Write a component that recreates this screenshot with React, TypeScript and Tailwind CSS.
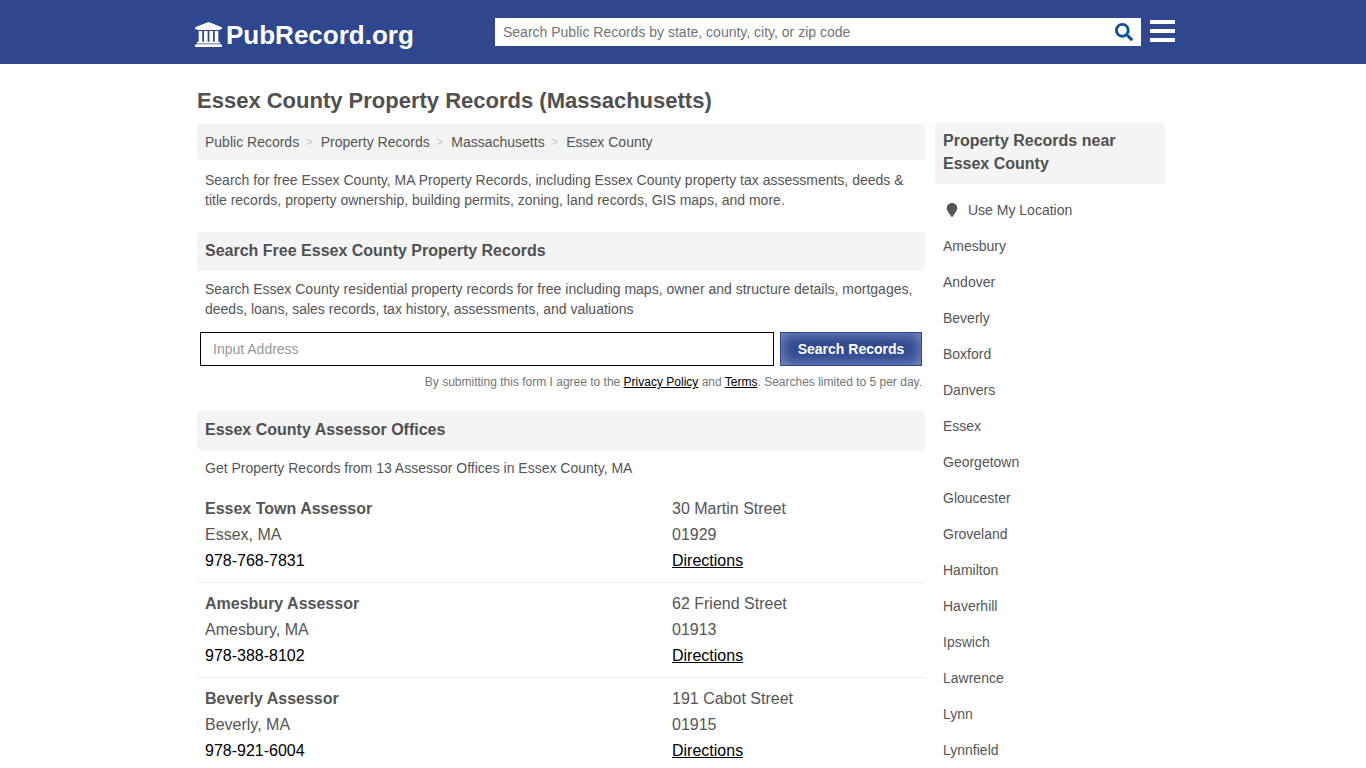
import { FaMapMarker, FaSearch } from "react-icons/fa";

const breadcrumbs = ["Public Records", "Property Records", "Massachusetts"];

const offices = [
  {
    name: "Essex Town Assessor",
    city: "Essex, MA",
    phone: "978-768-7831",
    street: "30 Martin Street",
    zip: "01929",
  },
  {
    name: "Amesbury Assessor",
    city: "Amesbury, MA",
    phone: "978-388-8102",
    street: "62 Friend Street",
    zip: "01913",
  },
  {
    name: "Beverly Assessor",
    city: "Beverly, MA",
    phone: "978-921-6004",
    street: "191 Cabot Street",
    zip: "01915",
  },
];

const nearby = [
  "Amesbury",
  "Andover",
  "Beverly",
  "Boxford",
  "Danvers",
  "Essex",
  "Georgetown",
  "Gloucester",
  "Groveland",
  "Hamilton",
  "Haverhill",
  "Ipswich",
  "Lawrence",
  "Lynn",
  "Lynnfield",
];

function CourthouseIcon() {
  return (
    <svg viewBox="0 0 1920 1792" fill="currentColor" className="h-[25px] w-[27px]" aria-hidden="true">
      <path d="M960 0l960 384v128h-128q0 26-20.5 45t-48.5 19h-1526q-28 0-48.5-19t-20.5-45h-128v-128zM256 640h256v768h128v-768h256v768h128v-768h256v768h128v-768h256v768h59q28 0 48.5 19t20.5 45v64h-1664v-64q0-26 20.5-45t48.5-19h59v-768zM1851 1600q28 0 48.5 19t20.5 45v128h-1920v-128q0-26 20.5-45t48.5-19h1782z" />
    </svg>
  );
}

function SectionTitle({ children }: { children: string }) {
  return (
    <h2 className="rounded bg-[#f4f4f4] px-2 pt-[7px] pb-[9px] text-base leading-[23px] font-bold text-[#505050]">
      {children}
    </h2>
  );
}

function Header() {
  return (
    <header className="bg-[#2e478e]">
      <div className="mx-auto flex h-16 max-w-[984px] items-center pl-1">
        <a href="#" className="flex w-[300px] items-center gap-1 pt-1 text-white">
          <CourthouseIcon />
          <span className="pt-[2px] text-[26px] leading-8 font-bold">PubRecord.org</span>
        </a>
        <form className="flex h-7 flex-1 items-center bg-white">
          <input
            type="text"
            aria-label="Search Public Records"
            placeholder="Search Public Records by state, county, city, or zip code"
            className="h-7 flex-1 px-2 text-sm text-black outline-none placeholder:text-[#757575]"
          />
          <button type="submit" aria-label="Search" className="px-2 text-[#0f4f9c]">
            <FaSearch className="size-[18px]" />
          </button>
        </form>
        <button type="button" aria-label="Menu" className="ml-[9px] flex w-[25px] flex-col gap-[5px] pb-[2px]">
          <span className="h-1 w-full bg-white" />
          <span className="h-1 w-full bg-white" />
          <span className="h-1 w-full bg-white" />
        </button>
      </div>
    </header>
  );
}

function AddressSearch() {
  return (
    <form className="px-[3px] pt-[13px]">
      <div className="flex gap-[6px]">
        <input
          type="text"
          aria-label="Address"
          placeholder="Input Address"
          className="h-[34px] flex-1 border border-black px-3 text-sm text-black outline-none placeholder:text-[#999999]"
        />
        <button
          type="submit"
          className="h-[34px] w-[142px] border border-[#2e478e] bg-[#2e478e] text-sm font-bold text-white shadow-[inset_0_0_15px_#8b9bcb]"
        >
          Search Records
        </button>
      </div>
      <p className="mt-2 text-right text-xs leading-4 text-[#757575]">
        By submitting this form I agree to the{" "}
        <a href="#" className="text-black underline">
          Privacy Policy
        </a>{" "}
        and{" "}
        <a href="#" className="text-black underline">
          Terms
        </a>
        . Searches limited to 5 per day.
      </p>
    </form>
  );
}

function Sidebar() {
  return (
    <aside className="w-[230px] shrink-0 pt-[58px]">
      <SectionTitle>Property Records near Essex County</SectionTitle>
      <ul className="px-2 pt-2 text-sm">
        <li className="flex h-9 items-center">
          <a href="#" className="flex items-center gap-2 pl-[1px]">
            <FaMapMarker className="h-[14px] w-4" />
            Use My Location
          </a>
        </li>
        {nearby.map((town) => (
          <li key={town} className="flex h-9 items-center">
            <a href="#">{town}</a>
          </li>
        ))}
      </ul>
    </aside>
  );
}

export default function App() {
  return (
    <div className="bg-white font-['Liberation_Sans',Arial,sans-serif] text-[#555555]">
      <Header />
      <div className="mx-auto flex max-w-[984px] gap-[10px] pr-[10px] pl-[6px]">
        <main className="min-w-0 flex-1">
          <h1 className="pt-[23px] pb-[9px] text-[22px] leading-7 font-bold text-[#505050]">
            Essex County Property Records (Massachusetts)
          </h1>
          <nav aria-label="Breadcrumb" className="rounded bg-[#f4f4f4] p-2">
            <ol className="flex text-sm leading-5">
              {breadcrumbs.map((crumb) => (
                <li key={crumb} className="flex">
                  <a href="#">{crumb}</a>
                  <span className="pr-2 pl-[6px] text-[13px] text-[#c4c4c4]">&gt;</span>
                </li>
              ))}
              <li>Essex County</li>
            </ol>
          </nav>
          <p className="px-2 pt-[10px] pb-[22px] text-sm leading-5">
            Search for free Essex County, MA Property Records, including Essex County property tax
            assessments, deeds &amp; title records, property ownership, building permits, zoning,
            land records, GIS maps, and more.
          </p>

          <SectionTitle>Search Free Essex County Property Records</SectionTitle>
          <p className="px-2 pt-2 text-sm leading-5">
            Search Essex County residential property records for free including maps, owner and
            structure details, mortgages, deeds, loans, sales records, tax history, assessments, and
            valuations
          </p>
          <AddressSearch />

          <section className="pt-[21px]">
            <SectionTitle>Essex County Assessor Offices</SectionTitle>
            <p className="px-2 pt-2 pb-[10px] text-sm leading-5">
              Get Property Records from 13 Assessor Offices in Essex County, MA
            </p>
            {offices.map((office) => (
              <article
                key={office.name}
                className="flex border-b border-[#ebebeb] p-2 text-base leading-[26px] last:border-b-0 last:pb-0"
              >
                <div className="w-[467px]">
                  <h3 className="font-bold">{office.name}</h3>
                  <p>{office.city}</p>
                  <a href="#" className="block text-black">
                    {office.phone}
                  </a>
                </div>
                <div>
                  <p>{office.street}</p>
                  <p>{office.zip}</p>
                  <a href="#" className="block text-black underline">
                    Directions
                  </a>
                </div>
              </article>
            ))}
          </section>
        </main>
        <Sidebar />
      </div>
    </div>
  );
}
